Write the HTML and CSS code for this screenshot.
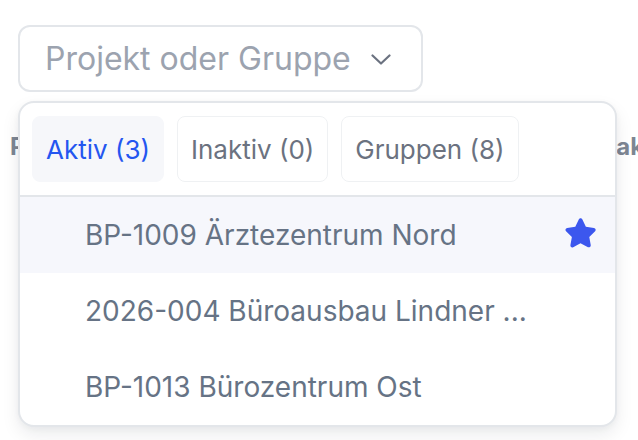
FILE: index.html
```html
<!DOCTYPE html>
<html lang="de">
<head>
<meta charset="utf-8">
<title>Projekt oder Gruppe</title>
<link rel="stylesheet" href="styles.css">
</head>
<body>
<div class="page">
  <button class="select" type="button">
    <span class="select-label">Projekt oder Gruppe</span>
    <svg class="chevron" width="20" height="11" viewBox="0 0 20 11" aria-hidden="true"><path d="M1.5 1.5 L10 9.5 L18.5 1.5" fill="none" stroke="#6b7280" stroke-width="2.2" stroke-linecap="round" stroke-linejoin="round"/></svg>
  </button>
  <div class="under-row">
    <span class="under-cell">Projekt</span>
    <span class="under-cell">Pakete</span>
  </div>
  <div class="panel">
    <div class="tabs">
      <button class="tab active" type="button">Aktiv (3)</button>
      <button class="tab" type="button">Inaktiv (0)</button>
      <button class="tab" type="button">Gruppen (8)</button>
    </div>
    <ul class="list">
      <li class="item selected">
        <span class="item-name">BP-1009 Ärztezentrum Nord</span>
        <svg class="star" width="39" height="39" viewBox="0 0 24 24" aria-hidden="true"><path d="M12 2.6c.5 0 .9.3 1.1.7l2.2 4.6 5 .7c1 .1 1.4 1.3.7 2l-3.6 3.5.9 5c.2 1-.9 1.7-1.7 1.3L12 18l-4.5 2.4c-.9.5-1.9-.3-1.7-1.3l.9-5-3.6-3.5c-.7-.7-.3-1.9.7-2l5-.7 2.2-4.6c.2-.4.6-.7 1-.7z" fill="#3c57ee"/></svg>
      </li>
      <li class="item"><span class="item-name">2026-004 Büroausbau Lindner ...</span></li>
      <li class="item"><span class="item-name">BP-1013 Bürozentrum Ost</span></li>
    </ul>
  </div>
</div>
</body>
</html>
```

FILE: styles.css
```css
* { box-sizing: border-box; }
html, body { margin: 0; padding: 0; background: #ffffff; }
body {
  font-family: Inter, "Noto Sans", "Liberation Sans", sans-serif;
  width: 638px;
  height: 440px;
  overflow: hidden;
}
.page {
  position: relative;
  padding: 25px 0 0 18px;
  height: 440px;
}
.select {
  display: flex;
  align-items: center;
  justify-content: space-between;
  width: 405px;
  height: 67px;
  padding: 0 30px 0 25px;
  border: 2px solid #e3e6ea;
  border-radius: 12px;
  background: #fff;
  font-family: inherit;
  font-size: 32px;
  color: #9ca3af;
  cursor: pointer;
}
.chevron { display: block; margin-top: 2px; }
.under-row {
  display: grid;
  grid-template-columns: 591px 37px;
  margin: 40px 0 0 -8px;
  width: 628px;
  overflow: hidden;
  font-size: 24px;
  font-weight: 700;
  color: #7d8693;
  white-space: nowrap;
}
.under-cell { overflow: hidden; }
.panel {
  position: absolute;
  left: 18px;
  top: 101px;
  width: 599px;
  height: 326px;
  background: #fff;
  border: 2px solid #e3e6ea;
  border-radius: 16px;
  box-shadow: 0 8px 18px rgba(17, 24, 39, 0.08), 0 2px 6px rgba(17, 24, 39, 0.04);
  overflow: hidden;
}
.tabs {
  display: flex;
  gap: 13px;
  padding: 13px 12px 13px;
  border-bottom: 2px solid #e3e6ea;
}
.tab {
  height: 66px;
  padding: 0 13px;
  border: 1px solid #eff1f3;
  border-radius: 8px;
  background: #fff;
  font-family: inherit;
  font-size: 26px;
  color: #6b7280;
  cursor: pointer;
}
.tab.active {
  background: #f6f7fa;
  border-color: #f6f7fa;
  color: #2456f0;
}
.list { list-style: none; margin: 0; padding: 0; }
.item {
  display: flex;
  align-items: center;
  justify-content: space-between;
  height: 76px;
  padding: 0 15px 0 65px;
  font-size: 28px;
  color: #667385;
}
.item.selected { background: #f6f7fc; }
.star { display: block; margin-top: -4px; }
```
